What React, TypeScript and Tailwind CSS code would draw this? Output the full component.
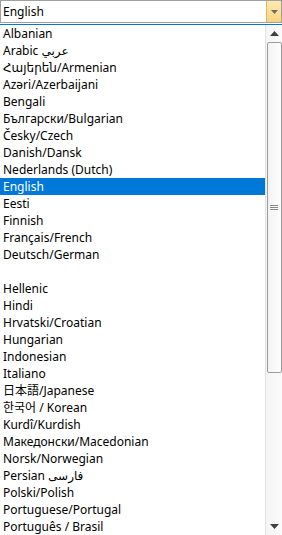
const languages = [
  'Albanian',
  'Arabic عربي',
  'Հայերեն/Armenian',
  'Azəri/Azerbaijani',
  'Bengali',
  'Български/Bulgarian',
  'Česky/Czech',
  'Danish/Dansk',
  'Nederlands (Dutch)',
  'English',
  'Eesti',
  'Finnish',
  'Français/French',
  'Deutsch/German',
  '',
  'Hellenic',
  'Hindi',
  'Hrvatski/Croatian',
  'Hungarian',
  'Indonesian',
  'Italiano',
  '日本語/Japanese',
  '한국어 / Korean',
  'Kurdî/Kurdish',
  'Македонски/Macedonian',
  'Norsk/Norwegian',
  'Persian فارسی',
  'Polski/Polish',
  'Portuguese/Portugal',
  'Português / Brasil',
];

const selected = 'English';

function ScrollBar() {
  return (
    <div className="flex w-[17px] shrink-0 flex-col items-center border-l border-[#e3e3e3] bg-gradient-to-r from-[#f4f4f4] to-[#fbfbfb]">
      <div className="flex h-[17px] w-full items-center justify-center">
        <svg width="9" height="5" viewBox="0 0 9 5">
          <path d="M0 5 L4.5 0 L9 5 Z" fill="#404040" />
        </svg>
      </div>
      <div className="flex h-[331px] w-[15px] items-center justify-center rounded-[2px] border border-[#9c9c9c] bg-gradient-to-r from-[#f3f3f3] to-[#fdfdfd]">
        <div className="flex flex-col gap-[1px]">
          <div className="h-[1px] w-[8px] bg-[#8a8a8a]" />
          <div className="h-[1px] w-[8px] bg-[#8a8a8a]" />
          <div className="h-[1px] w-[8px] bg-[#8a8a8a]" />
        </div>
      </div>
      <div className="flex-1" />
      <div className="flex h-[17px] w-full items-center justify-center">
        <svg width="9" height="5" viewBox="0 0 9 5">
          <path d="M0 0 L9 0 L4.5 5 Z" fill="#404040" />
        </svg>
      </div>
    </div>
  );
}

export default function App() {
  return (
    <div
      className="flex h-[535px] w-[282px] flex-col overflow-hidden bg-white text-[12px] text-black"
      style={{ fontFamily: '"Noto Sans", "DejaVu Sans", "Noto Sans CJK JP", sans-serif' }}
    >
      <div className="flex h-[23px] shrink-0 border border-[#a0a0a0]">
        <div className="flex flex-1 items-center pl-[2px] pt-[1px] leading-none">{selected}</div>
        <div className="flex w-[15px] items-center justify-center border-l border-[#e0b95c] bg-gradient-to-b from-[#fde9b0] to-[#f9d47e]">
          <svg width="7" height="4" viewBox="0 0 7 4">
            <path d="M0 0 L7 0 L3.5 4 Z" fill="#6b6b6b" />
          </svg>
        </div>
      </div>
      <div className="h-[1px] shrink-0" />
      <div className="flex min-h-0 flex-1 border-t border-[#0078d7]">
        <ul className="min-w-0 flex-1">
          {languages.map((lang, i) => (
            <li
              key={i}
              className={`flex h-[17px] items-center whitespace-nowrap pl-[3px] pt-[1px] leading-none ${
                lang === selected ? 'bg-[#0078d7] text-white' : ''
              }`}
            >
              {lang}
            </li>
          ))}
        </ul>
        <ScrollBar />
      </div>
    </div>
  );
}
